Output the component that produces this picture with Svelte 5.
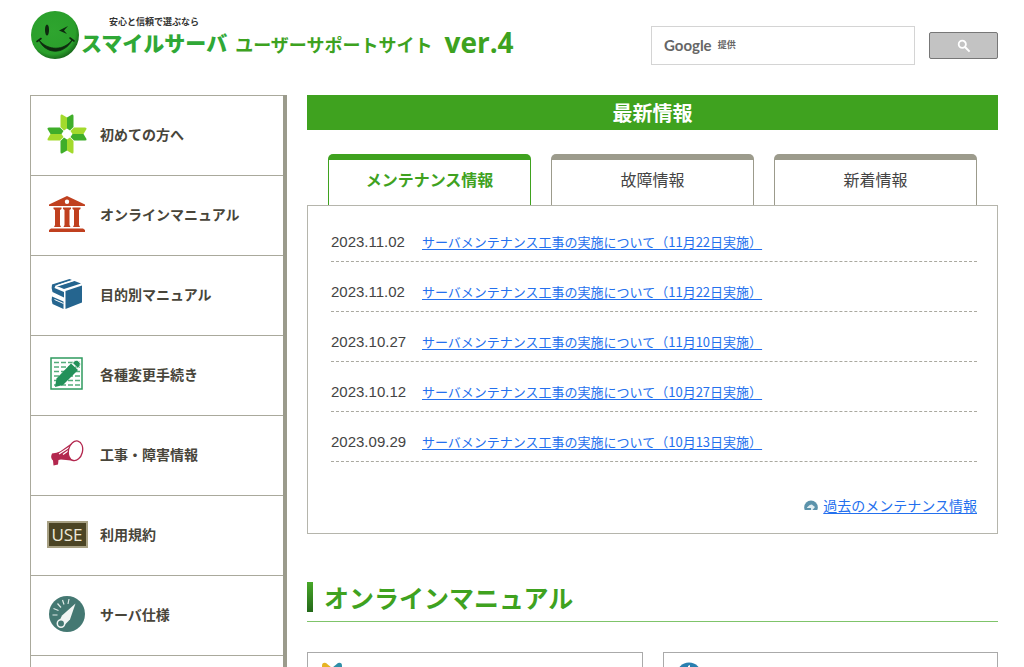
<script>
  const menu = [
    { icon: 'leaf', label: '初めての方へ' },
    { icon: 'hall', label: 'オンラインマニュアル' },
    { icon: 'book', label: '目的別マニュアル' },
    { icon: 'form', label: '各種変更手続き' },
    { icon: 'horn', label: '工事・障害情報' },
    { icon: 'use', label: '利用規約' },
    { icon: 'gauge', label: 'サーバ仕様' }
  ];
  const tabs = ['メンテナンス情報', '故障情報', '新着情報'];
  const news = [
    { date: '2023.11.02', day: '11月22日' },
    { date: '2023.11.02', day: '11月22日' },
    { date: '2023.10.27', day: '11月10日' },
    { date: '2023.10.12', day: '10月27日' },
    { date: '2023.09.29', day: '10月13日' }
  ];
  let active = $state(0);
  let query = $state('');
</script>

<div class="page">
  <header>
    <a class="logo" href="#top">
      <svg class="smile" width="50" height="50" viewBox="0 0 50 50" aria-hidden="true">
        <defs>
          <radialGradient id="face" cx="45%" cy="42%" r="58%">
            <stop offset="0" stop-color="#2fa52f" />
            <stop offset="0.82" stop-color="#2a9f2b" />
            <stop offset="1" stop-color="#1a6d1c" />
          </radialGradient>
        </defs>
        <circle cx="25" cy="25" r="24" fill="url(#face)" />
        <ellipse cx="17" cy="20" rx="2" ry="5.500" fill="#0e2a0f" />
        <path d="M38 16 L29 20.500 L37 24 L34 20.500Z" fill="#0e2a0f" />
        <path d="M9 30 C15 44 34 46 42.500 29.500 C34 41 18 41 9 30Z" fill="#0e2a0f" stroke="#0e2a0f" stroke-width="0.800" />
        <path d="M7 31.500 L11 28.500 M40 28 L44 31" stroke="#0e2a0f" stroke-width="1.600" stroke-linecap="round" />
      </svg>
      <span class="brand">
        <small>安心と信頼で選ぶなら</small>
        <strong>スマイルサーバ</strong>
      </span>
      <span class="site">ユーザーサポートサイト</span>
      <span class="ver">ver.4</span>
    </a>
    <form class="search" onsubmit={(e) => e.preventDefault()}>
      <div class="field">
        <input type="text" id="q" aria-label="検索" bind:value={query} />
        {#if !query}
          <label for="q"><b>Google</b><span>提供</span></label>
        {/if}
      </div>
      <button type="submit" aria-label="検索">
        <svg width="14" height="14" viewBox="0 0 14 14" aria-hidden="true">
          <circle cx="5.300" cy="5.300" r="3.600" fill="none" stroke="#fff" stroke-width="1.800" />
          <path d="M8 8 L12.600 12.600" stroke="#fff" stroke-width="2" />
        </svg>
      </button>
    </form>
  </header>

  <div class="columns">
    <nav>
      {#each menu as item}
        <a href="#menu">
          <span class="pic">
            {#if item.icon === 'leaf'}
              <svg width="40" height="40" viewBox="0 0 40 40" aria-hidden="true">
                {#each [0, 90, 180, 270] as turn}
                  <g transform="rotate({turn} 20 20)">
                    <path d="M20 3.500 L15 0.500 Q13.500 0 13.500 2 V13 L17 16.500 L20 14.500Z" fill="#a3da2c" />
                    <path d="M20 3.500 L25 0.500 Q26.500 0 26.500 2 V13 L23 16.500 L20 14.500Z" fill="#3fae2a" />
                  </g>
                {/each}
              </svg>
            {:else if item.icon === 'hall'}
              <svg width="38" height="38" viewBox="0 0 38 38" fill="#c0401f" aria-hidden="true">
                <path fill-rule="evenodd" d="M19 1 L37 9.500 V11 H1 V9.500Z M19 4.500 A2.200 2.200 0 1 0 19 8.900 A2.200 2.200 0 1 0 19 4.500Z" />
                <path d="M5.500 12.500 H13.500 V14 L12 15 V30 L13 32 H6 L7 30 V15 L5.500 14Z M15 12.500 H23 V14 L21.500 15 V30 L22.500 32 H15.500 L16.500 30 V15 L15 14Z M24.500 12.500 H32.500 V14 L31 15 V30 L32 32 H25 L26 30 V15 L24.500 14Z" />
                <path d="M3 33.500 H35 L37 35 V37 H1 V35Z" />
              </svg>
            {:else if item.icon === 'book'}
              <svg width="32" height="32" viewBox="0 0 32 32" fill="#25658f" aria-hidden="true">
                <path d="M14.500 13 L31 7.500 V24.500 L14.500 31Z" />
                <path d="M1 6.500 L18.500 1 L21 2 L4.500 7.500 L13 11 L30 5.500 L23.500 3 L8 8 L4.500 7.500 L3.500 10 L13 14 V19.500 L1.500 14 Q0 10 1 6.500Z" />
                <path d="M1 18.500 L12.500 23.500 V31 L1.500 26 Q0 22 1 18.500Z" />
                <path d="M5.500 7.800 L22 2.600" stroke="#fff" stroke-width="1" fill="none" />
                <path d="M3.500 21.500 L12.500 25.500" stroke="#fff" stroke-width="1" fill="none" />
              </svg>
            {:else if item.icon === 'form'}
              <svg width="34" height="34" viewBox="0 0 34 34" aria-hidden="true">
                <rect x="1" y="1" width="31" height="31" fill="#fff" stroke="#2f9b5f" stroke-width="1.500" />
                <path d="M4 5.500 H30 M4 10 H30 M4 14.500 H30 M4 19 H30 M4 23.500 H30 M4 28 H30" stroke="#55ad7c" stroke-width="1.300" stroke-dasharray="5 2" />
                <path d="M5 30 L6.500 21.500 L21 6.500 L28 13 L13 28Z" fill="#23915a" />
                <path d="M22.500 6 L25 3.500 Q27 2.500 29 4.500 Q31 6.500 30 8.500 L28 11.500Z" fill="#23915a" stroke="#fff" stroke-width="0.800" />
              </svg>
            {:else if item.icon === 'horn'}
              <svg width="34" height="28" viewBox="0 0 34 28" aria-hidden="true">
                <path d="M2 13.500 Q7 13 10 11.500 L24 1.500 L26 21 L11 19.500 L8.500 20 L8 24.500 L3.500 25.500 L3 20.500 Q0 18 2 13.500Z" fill="#b3274e" />
                <path d="M9 14 L22 5.500 M13 14.500 L20 9.500" stroke="#fff" stroke-width="1.200" fill="none" />
                <ellipse cx="25.500" cy="10.800" rx="7" ry="10" transform="rotate(14 25.500 10.800)" fill="#fff" stroke="#b3274e" stroke-width="1.300" />
              </svg>
            {:else if item.icon === 'use'}
              <span class="use">USE</span>
            {:else}
              <svg width="38" height="38" viewBox="0 0 38 38" aria-hidden="true">
                <circle cx="19" cy="19" r="18" fill="#447872" />
                <path d="M4.500 20 H9.500 M5.500 13.500 L10.500 15.500 M9.500 8.500 L13 12.500 M14.500 5 L16 9.500 M21 4 L20 9" stroke="#dfeae7" stroke-width="1.200" />
                <path d="M27.500 8.500 L22 24.500 L16 30.500 L11 26.500 L14 20.500Z" fill="#f2f6f4" />
                <circle cx="13" cy="28.500" r="3.700" fill="#447872" stroke="#f2f6f4" stroke-width="1.500" />
              </svg>
            {/if}
          </span>
          {item.label}
        </a>
      {/each}
      <a href="#menu" aria-label="メニュー"><span class="pic"></span></a>
    </nav>

    <main>
      <h2 class="banner">最新情報</h2>
      <div class="tabs" role="tablist">
        {#each tabs as tab, i}
          <button type="button" role="tab" aria-selected={active === i} class:on={active === i} onclick={() => (active = i)}>{tab}</button>
        {/each}
      </div>
      <section class="panel">
        <ul>
          {#each news as row}
            <li>
              <time>{row.date}</time>
              <a href="#news">サーバメンテナンス工事の実施について（{row.day}実施）</a>
            </li>
          {/each}
        </ul>
        <p class="more">
          <svg width="14" height="10" viewBox="0 0 14 10" aria-hidden="true">
            <circle cx="7" cy="7.300" r="6.800" fill="#5c93ab" />
            <path d="M3 7.500 Q7 3 9 5.500 L11 7 L8.500 10 H7 V8 H3Z" fill="#e3eef2" />
          </svg>
          <a href="#past">過去のメンテナンス情報</a>
        </p>
      </section>

      <h2 class="title">オンラインマニュアル</h2>
      <div class="cards">
        <a href="#beginner" aria-label="初めての方へ">
          <svg width="24" height="32" viewBox="0 0 24 32" aria-hidden="true">
            <path d="M2 4 Q2 0 6 1 L12 6 V30 L2 21Z" fill="#e6b422" />
            <path d="M22 4 Q22 0 18 1 L12 6 V30 L22 21Z" fill="#2f8fa8" />
          </svg>
        </a>
        <a href="#guide" aria-label="マニュアル">
          <svg width="26" height="26" viewBox="0 0 26 26" aria-hidden="true">
            <circle cx="13" cy="13" r="12.500" fill="#2a7fb0" />
            <path d="M12 4 L14 3 V22 H12Z" fill="#fff" />
          </svg>
        </a>
      </div>
    </main>
  </div>
</div>

<style>
  :global(body) {
    margin: 0;
    background: #fff;
  }
  .page {
    box-sizing: border-box;
    height: 100vh;
    overflow: hidden;
    padding: 0 26px 0 30px;
    font-family: 'Noto Sans CJK JP', sans-serif;
    font-size: 14px;
    line-height: 20px;
    color: #444;
  }
  header {
    display: flex;
    justify-content: space-between;
    align-items: flex-start;
    height: 95px;
  }
  .logo {
    display: flex;
    align-items: flex-start;
    padding-top: 10px;
    color: #3da21f;
    text-decoration: none;
    white-space: nowrap;
  }
  .brand {
    display: flex;
    flex-direction: column;
    padding-top: 6px;
    margin: 0 8px 0 1px;
  }
  .brand small {
    padding-left: 28px;
    font-size: 9px;
    line-height: 12px;
    font-weight: 700;
    color: #333;
  }
  .brand strong {
    font-size: 21px;
    line-height: 28px;
    font-weight: 900;
    color: #2fa836;
  }
  .site {
    padding-top: 20px;
    font-size: 18px;
    line-height: 28px;
    font-weight: 700;
  }
  .ver {
    padding-top: 14px;
    margin-left: 12px;
    font-family: 'Open Sans', sans-serif;
    font-size: 28px;
    line-height: 36px;
    font-weight: 700;
  }
  .search {
    display: flex;
    align-items: center;
    gap: 14px;
    padding-top: 26px;
  }
  .field {
    position: relative;
  }
  .field input {
    display: block;
    box-sizing: border-box;
    width: 264px;
    height: 39px;
    padding: 0 12px;
    border: 1px solid #d4d4d4;
    font-size: 14px;
    outline: 0;
  }
  .field label {
    position: absolute;
    left: 13px;
    top: 9px;
    display: flex;
    align-items: center;
    gap: 6px;
    color: #666;
  }
  .field b {
    font-family: Lato, sans-serif;
    font-size: 15px;
  }
  .field span {
    font-size: 9px;
    font-weight: 700;
  }
  .search button {
    display: flex;
    align-items: center;
    justify-content: center;
    width: 69px;
    height: 27px;
    padding: 0;
    border: 1px solid #777;
    border-radius: 2px;
    background: #c3c3c3;
  }
  .columns {
    display: flex;
    align-items: flex-start;
    gap: 20px;
  }
  nav {
    flex: 0 0 252px;
    border: solid #aaa99c;
    border-width: 0 4px 0 1px;
    border-right-color: #9b9b8c;
  }
  nav a {
    display: flex;
    align-items: center;
    box-sizing: border-box;
    height: 80px;
    padding: 0 0 3px 15px;
    border-top: 1px solid #aaa99c;
    font-weight: 700;
    color: #48453a;
    text-decoration: none;
  }
  .pic {
    display: flex;
    justify-content: center;
    width: 42px;
    margin-right: 12px;
  }
  .use {
    box-sizing: border-box;
    width: 41px;
    height: 27px;
    border: 2px solid #a8a184;
    background: #4b4424;
    font-family: 'Open Sans', sans-serif;
    font-size: 17px;
    line-height: 23px;
    font-weight: 400;
    text-align: center;
    color: #eee9d8;
  }
  main {
    flex: 1;
    min-width: 0;
  }
  .banner {
    margin: 0 0 24px;
    background: #3fa21f;
    color: #fff;
    font-size: 20px;
    line-height: 35px;
    text-align: center;
  }
  .tabs {
    display: grid;
    grid-template-columns: repeat(3, 1fr);
    gap: 20px;
    padding: 0 21px;
  }
  .tabs button {
    height: 51px;
    padding: 0 0 7px;
    border: solid #9c9b8c;
    border-width: 6px 1px 0;
    border-radius: 5px 5px 0 0;
    background: #fff;
    font-family: inherit;
    font-size: 16px;
    line-height: 24px;
    color: #444;
  }
  .tabs .on {
    border-color: #3fa21f;
    color: #3fa21f;
    font-weight: 700;
  }
  .panel {
    padding: 6px 20px 18px 23px;
    border: 1px solid #b5b5ac;
  }
  ul {
    margin: 0;
    padding: 0;
    list-style: none;
  }
  li {
    display: flex;
    padding: 20px 0 9px;
    border-bottom: 1px dashed #aaa9a0;
  }
  time {
    flex: 0 0 91px;
    font-family: 'Liberation Sans', sans-serif;
    font-size: 15px;
  }
  li a {
    font-size: 13px;
  }
  li a,
  .more a {
    color: #2470ee;
    text-decoration: underline;
    text-underline-offset: 2px;
  }
  .more {
    display: flex;
    align-items: center;
    justify-content: flex-end;
    gap: 5px;
    margin: 33px 0 0;
  }
  .title {
    margin: 48px 0 30px;
    border-bottom: 1px solid #7fc46a;
    font-size: 25px;
    line-height: 30px;
    padding-bottom: 9px;
    padding-left: 17px;
    color: #3fa21f;
    background: linear-gradient(#48a828, #24681a) no-repeat left top / 6px 30px;
  }
  .cards {
    display: grid;
    grid-template-columns: 1fr 1fr;
    gap: 20px;
  }
  .cards a {
    display: block;
    height: 80px;
    padding: 9px 12px;
    border: 1px solid #aaa;
  }
</style>
